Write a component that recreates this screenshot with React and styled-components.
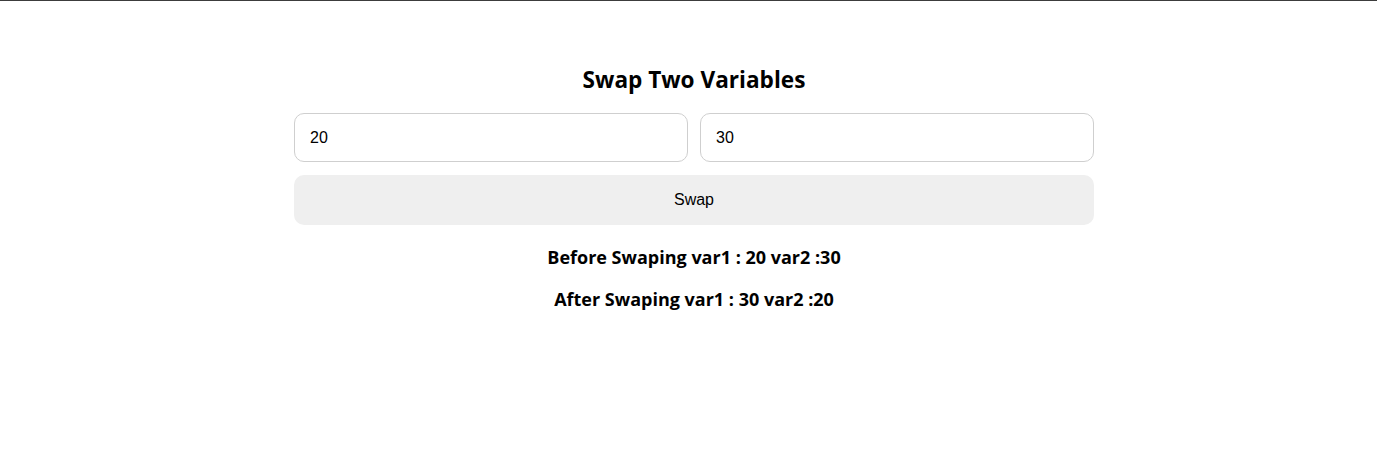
import React, { useState } from "react";
import styled, { createGlobalStyle } from "styled-components";

const GlobalStyle = createGlobalStyle`
  html, body {
    margin: 0;
    padding: 0;
    background: #fff;
  }
  body {
    font-family: "Liberation Sans", Arial, sans-serif;
    color: #000;
  }
`;

const App = () => {
  const [var1, setVar1] = useState("20");
  const [var2, setVar2] = useState("30");

  return (
    <>
      <GlobalStyle />
      <Page>
        <Card>
          <Title>Swap Two Variables</Title>
          <InputRow>
            <Field value={var1} onChange={(e) => setVar1(e.target.value)} />
            <Field value={var2} onChange={(e) => setVar2(e.target.value)} />
          </InputRow>
          <SwapButton>Swap</SwapButton>
          <Result>Before Swaping var1 : {var1} var2 :{var2}</Result>
          <Result>After Swaping var1 : {var2} var2 :{var1}</Result>
        </Card>
      </Page>
    </>
  );
};

export default App;

const Page = styled.div`
  border-top: 1px solid #3c3c3c;
  min-height: 451px;
  display: flex;
  justify-content: center;
  padding-left: 11px;
  box-sizing: border-box;
`;

const Card = styled.div`
  width: 800px;
  display: flex;
  flex-direction: column;
  align-items: stretch;
  padding-top: 64px;
`;

const Title = styled.h2`
  margin: 0 0 18px;
  text-align: center;
  font-family: "Open Sans", "Noto Sans", sans-serif;
  font-size: 22.6px;
  font-weight: 700;
  line-height: 30px;
`;

const InputRow = styled.div`
  display: grid;
  grid-template-columns: 1fr 1fr;
  gap: 12px;
`;

const Field = styled.input`
  height: 49px;
  box-sizing: border-box;
  border: 1px solid #cfcfcf;
  border-radius: 10px;
  padding: 0 15px;
  font-family: "Liberation Sans", Arial, sans-serif;
  font-size: 16px;
  color: #000;
  outline: none;
`;

const SwapButton = styled.button`
  margin-top: 13px;
  height: 50px;
  border: none;
  border-radius: 10px;
  background: #efefef;
  font-family: "Liberation Sans", Arial, sans-serif;
  font-size: 16px;
  color: #000;
  cursor: pointer;
`;

const Result = styled.p`
  margin: 21px 0 0;
  text-align: center;
  font-family: "Open Sans", "Noto Sans", sans-serif;
  font-size: 18px;
  font-weight: 700;
  line-height: 22px;

  & + & {
    margin-top: 20px;
  }
`;
